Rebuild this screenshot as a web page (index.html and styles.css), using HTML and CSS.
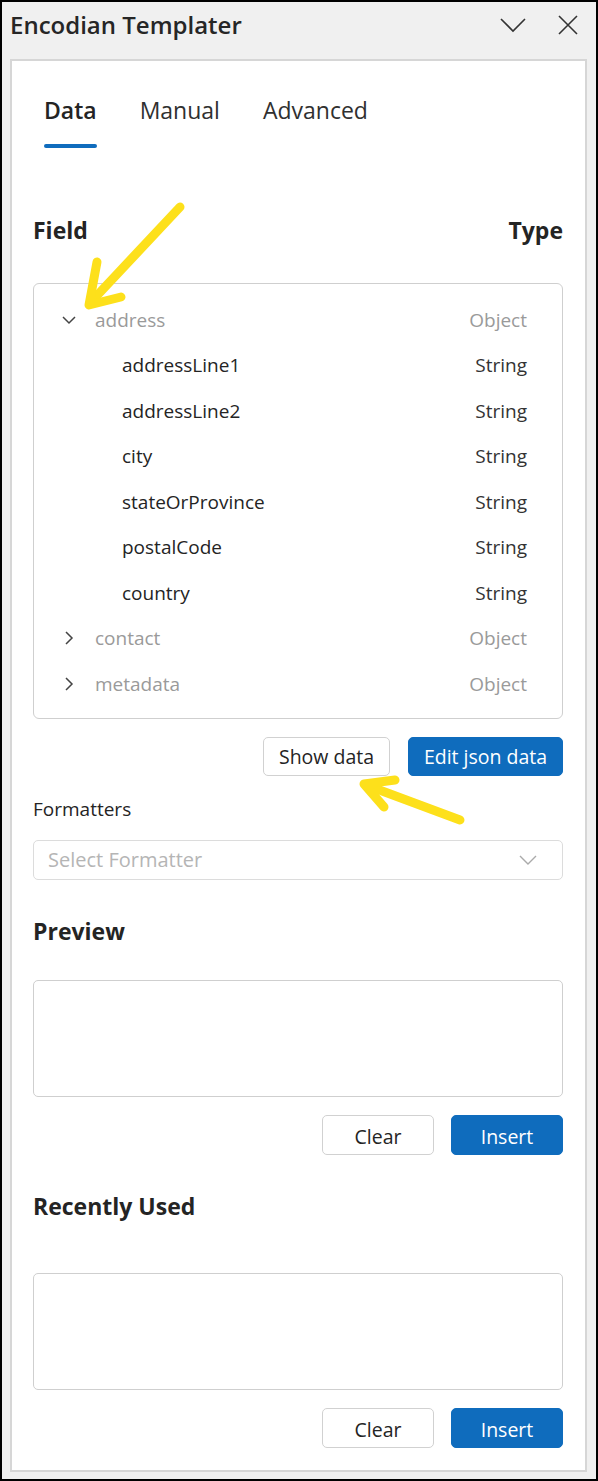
FILE: index.html
```html
<!DOCTYPE html>
<html>
<head>
<meta charset="utf-8">
<link rel="stylesheet" href="styles.css">
</head>
<body>
<div class="window">
  <header class="titlebar">
    <h1 class="title">Encodian Templater</h1>
    <div class="title-actions">
      <svg class="ticon" width="26" height="16" viewBox="0 0 26 16"><path d="M1 2 L13 14 L25 2" fill="none" stroke="#333" stroke-width="1.6"/></svg>
      <svg class="ticon" width="20" height="20" viewBox="0 0 20 20"><path d="M1 1 L19 19 M19 1 L1 19" fill="none" stroke="#333" stroke-width="1.6"/></svg>
    </div>
  </header>
  <main class="panel">
    <nav class="tabs">
      <span class="tab active">Data</span>
      <span class="tab">Manual</span>
      <span class="tab">Advanced</span>
    </nav>
    <div class="section-head">
      <span>Field</span><span>Type</span>
    </div>
    <div class="tree">
      <div class="row parent"><span class="chev"><svg width="14" height="10" viewBox="0 0 14 10"><path d="M1 2 L7 8 L13 2" fill="none" stroke="#444" stroke-width="1.5"/></svg></span><span class="name">address</span><span class="type">Object</span></div>
      <div class="row child"><span class="name">addressLine1</span><span class="type">String</span></div>
      <div class="row child"><span class="name">addressLine2</span><span class="type">String</span></div>
      <div class="row child"><span class="name">city</span><span class="type">String</span></div>
      <div class="row child"><span class="name">stateOrProvince</span><span class="type">String</span></div>
      <div class="row child"><span class="name">postalCode</span><span class="type">String</span></div>
      <div class="row child"><span class="name">country</span><span class="type">String</span></div>
      <div class="row parent"><span class="chev"><svg width="14" height="14" viewBox="0 0 14 14"><path d="M4 1 L10 7 L4 13" fill="none" stroke="#444" stroke-width="1.5"/></svg></span><span class="name">contact</span><span class="type">Object</span></div>
      <div class="row parent"><span class="chev"><svg width="14" height="14" viewBox="0 0 14 14"><path d="M4 1 L10 7 L4 13" fill="none" stroke="#444" stroke-width="1.5"/></svg></span><span class="name">metadata</span><span class="type">Object</span></div>
    </div>
    <div class="btn-row first">
      <button class="btn secondary w-show">Show data</button>
      <button class="btn primary w-edit">Edit json data</button>
    </div>
    <label class="label">Formatters</label>
    <div class="select">
      <span>Select Formatter</span>
      <svg width="18" height="10" viewBox="0 0 18 10"><path d="M1 1 L9 9 L17 1" fill="none" stroke="#aaa" stroke-width="1.4"/></svg>
    </div>
    <h2 class="heading preview-h">Preview</h2>
    <div class="box"></div>
    <div class="btn-row">
      <button class="btn secondary w-std">Clear</button>
      <button class="btn primary w-std">Insert</button>
    </div>
    <h2 class="heading">Recently Used</h2>
    <div class="box recent"></div>
    <div class="btn-row">
      <button class="btn secondary w-std">Clear</button>
      <button class="btn primary w-std">Insert</button>
    </div>
  </main>
  <svg class="annotations" width="598" height="1481" viewBox="0 0 598 1481">
    <g fill="none" stroke="#fde01b" stroke-width="9" stroke-linecap="round" stroke-linejoin="round">
      <path d="M180 207 L90 303"/>
      <path d="M97 262 L89 305 L121 297"/>
      <path d="M460 820 L366 785"/>
      <path d="M395 780 L364 784 L384 807"/>
    </g>
  </svg>
</div>
</body>
</html>
```
FILE: styles.css
```css
* { box-sizing: border-box; }
html, body { margin: 0; padding: 0; }
body {
  font-family: "Open Sans", "Noto Sans", sans-serif;
  color: #242424;
}
.window {
  position: relative;
  width: 598px;
  height: 1481px;
  border: 2px solid #000;
  background: #f0f0f0;
  display: flex;
  flex-direction: column;
}
.titlebar {
  height: 57px;
  display: flex;
  align-items: center;
  justify-content: space-between;
  padding: 0 18px 12px 8px;
}
.title {
  margin: 0;
  font-size: 24px;
  font-weight: 600;
  color: #262626;
}
.title-actions {
  display: flex;
  align-items: center;
  gap: 32px;
}
.panel {
  margin: 0 9px 7px 8px;
  flex: 1;
  background: #fff;
  border: 2px solid #d6d6d6;
  padding: 0 22px 0 21px;
  display: flex;
  flex-direction: column;
}
.tabs {
  display: flex;
  gap: 43px;
  padding: 33px 0 0 11px;
}
.tab {
  font-size: 23px;
  line-height: 32px;
  color: #303030;
  padding-bottom: 18px;
  position: relative;
}
.tab.active {
  font-weight: 600;
  color: #242424;
}
.tab.active::after {
  content: "";
  position: absolute;
  left: 0;
  right: 0;
  bottom: -4px;
  height: 4px;
  border-radius: 2px;
  background: #0f6cbd;
}
.section-head {
  margin-top: 71px;
  display: flex;
  justify-content: space-between;
  font-size: 23px;
  font-weight: 700;
  line-height: 30px;
}
.tree {
  margin-top: 38px;
  border: 1px solid #cfcfcf;
  border-radius: 6px;
  padding: 13px 35px 11px 28px;
}
.row {
  height: 45.5px;
  display: flex;
  align-items: center;
  font-size: 19px;
}
.chev {
  width: 33px;
  display: flex;
  align-items: center;
}
.row.parent .name, .row.parent .type { color: #9a9a9a; }
.row.child { padding-left: 60px; }
.row .name { flex: 1; }
.row.child .type { color: #333; }
.btn-row {
  margin-top: 18px;
  display: flex;
  justify-content: flex-end;
  gap: 17px;
}
.btn-row.first { gap: 18px; }
.btn {
  height: 40px;
  font-family: inherit;
  font-size: 19.5px;
  border-radius: 5px;
  padding: 3px 0 0;
  cursor: pointer;
}
.btn.secondary {
  background: #fff;
  border: 1px solid #d1d1d1;
  color: #242424;
}
.btn.primary {
  background: #0f6cbd;
  border: 1px solid #0f6cbd;
  color: #fff;
}
.w-show { width: 127px; height: 39px; padding-top: 1px; }
.w-edit { width: 155px; height: 39px; padding-top: 1px; }
.w-std { width: 112px; }
.label {
  margin-top: 20px;
  font-size: 19px;
  line-height: 26px;
  color: #242424;
}
.select {
  margin-top: 18px;
  height: 40px;
  border: 1px solid #dcdcdc;
  border-radius: 5px;
  display: flex;
  align-items: center;
  justify-content: space-between;
  padding: 0 25px 0 14px;
  font-size: 20px;
  color: #b5b5b5;
}
.heading {
  margin: 36px 0 0;
  font-size: 23px;
  font-weight: 700;
  line-height: 30px;
}
.box {
  margin-top: 34px;
  height: 117px;
  border: 1px solid #cfcfcf;
  border-radius: 5px;
}
.box.recent { margin-top: 52px; }
.annotations {
  position: absolute;
  left: -2px;
  top: -2px;
  pointer-events: none;
}
```
